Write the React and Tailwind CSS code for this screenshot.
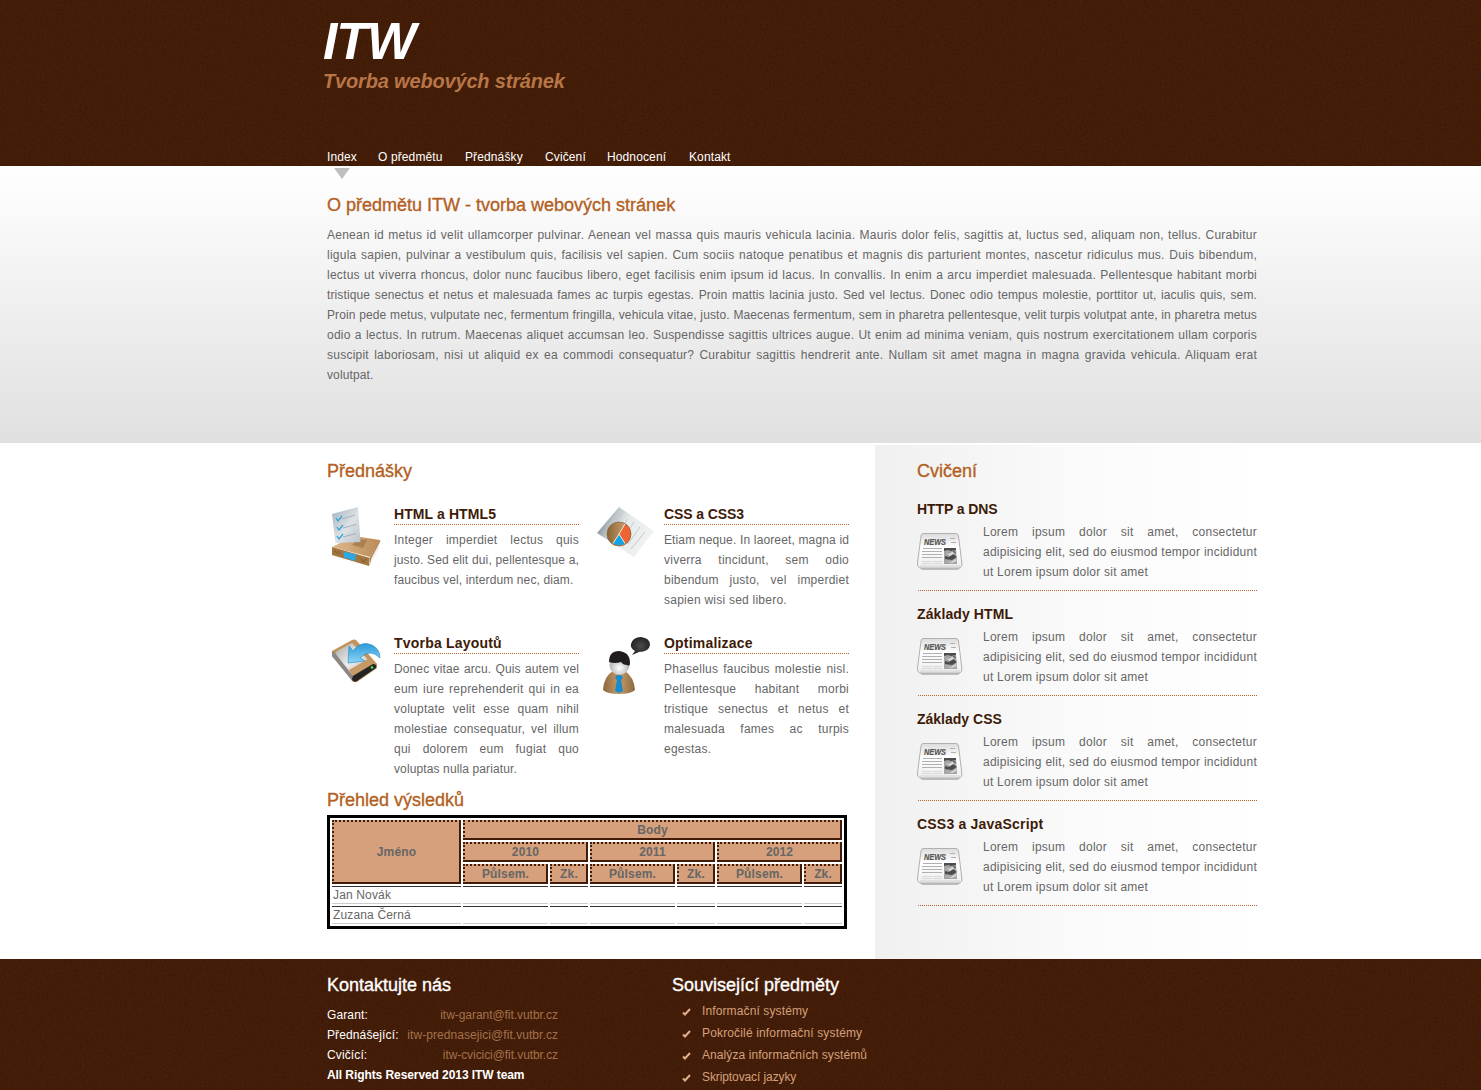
import React from "react";

const INTRO = [
  "Aenean id metus id velit ullamcorper pulvinar. Aenean vel massa quis mauris vehicula lacinia. Mauris dolor felis, sagittis at, luctus sed, aliquam non, tellus. Curabitur",
  "ligula sapien, pulvinar a vestibulum quis, facilisis vel sapien. Cum sociis natoque penatibus et magnis dis parturient montes, nascetur ridiculus mus. Duis bibendum,",
  "lectus ut viverra rhoncus, dolor nunc faucibus libero, eget facilisis enim ipsum id lacus. In convallis. In enim a arcu imperdiet malesuada. Pellentesque habitant morbi",
  "tristique senectus et netus et malesuada fames ac turpis egestas. Proin mattis lacinia justo. Sed vel lectus. Donec odio tempus molestie, porttitor ut, iaculis quis, sem.",
  "Proin pede metus, vulputate nec, fermentum fringilla, vehicula vitae, justo. Maecenas fermentum, sem in pharetra pellentesque, velit turpis volutpat ante, in pharetra metus",
  "odio a lectus. In rutrum. Maecenas aliquet accumsan leo. Suspendisse sagittis ultrices augue. Ut enim ad minima veniam, quis nostrum exercitationem ullam corporis",
  "suscipit laboriosam, nisi ut aliquid ex ea commodi consequatur? Curabitur sagittis hendrerit ante. Nullam sit amet magna in magna gravida vehicula. Aliquam erat",
  "volutpat.",
];

const NAV = [
  ["Index", "w-[51px]"],
  ["O předmětu", "w-[87px]"],
  ["Přednášky", "w-[80px]"],
  ["Cvičení", "w-[62px]"],
  ["Hodnocení", "w-[82px]"],
  ["Kontakt", "w-[60px]"],
];

function Lines({ lines, tight = [] }) {
  const last = lines.length - 1;
  return (
    <p className="text-xs leading-5 text-[#666]">
      {lines.map((line, i) => (
        <span
          key={i}
          className={
            "block whitespace-nowrap " +
            (i === last ? "" : "[text-align-last:justify] ") +
            (tight.includes(i) ? "tracking-[0.12px]" : "tracking-[0.24px]")
          }
        >
          {line}
        </span>
      ))}
    </p>
  );
}

function Grain() {
  return (
    <svg className="pointer-events-none absolute inset-0 h-full w-full" aria-hidden="true">
      <filter id="grain" x="0" y="0" width="100%" height="100%">
        <feTurbulence type="fractalNoise" baseFrequency="0.45" numOctaves="2" seed="4" />
        <feColorMatrix values="0 0 0 0 0  0 0 0 0 0  0 0 0 0 0  0.45 0 0 0 -0.14" />
      </filter>
      <rect width="100%" height="100%" filter="url(#grain)" opacity="0.7" />
    </svg>
  );
}

function BookIcon() {
  return (
    <svg width="50" height="62" viewBox="0 0 50 62">
      <defs>
        <linearGradient id="bkP" x1="0" y1="0" x2="1" y2="1">
          <stop offset="0" stopColor="#a4b1ba" />
          <stop offset=".55" stopColor="#dce2e6" />
          <stop offset="1" stopColor="#b9c3ca" />
        </linearGradient>
        <linearGradient id="bkC" x1="0" y1="0" x2="1" y2="0">
          <stop offset="0" stopColor="#dfb98b" />
          <stop offset="1" stopColor="#b98a58" />
        </linearGradient>
      </defs>
      <path d="M0 41 22 30 48 34 38 51Z" fill="url(#bkC)" />
      <path d="M0 41 38 52 37 60 0 49Z" fill="#a3753f" />
      <path d="M38 51 48 34 47 43 37 60Z" fill="#f1eeee" />
      <path d="M38 51 47.500 34 48.500 35 39.500 52 37.500 60Z" fill="#b78450" />
      <path d="M25 33 35 34 31 42 20 39Z" fill="#9b7145" opacity=".65" />
      <path d="M11.500 45.500 24 48.500 23 55 12 51.500Z" fill="#2aa9e4" />
      <path d="M3 44l2 4M6 45l2 3M29 53l2 3M34 53l-3 4" stroke="#7d5a33" />
      <path d="M0 8 26 1 28.500 36 3.500 37Z" fill="url(#bkP)" />
      <path d="M10 13 23 9M11 22 24 18.500M11 31 24 27.500" stroke="#97a5ae" strokeWidth=".8" />
      <path d="m4 12 2 3 4-5M5 21l2 3 4-5M5 30l2 3 4-5" fill="none" stroke="#28a3dc" strokeWidth="1.300" />
    </svg>
  );
}

function ChartIcon() {
  return (
    <svg width="58" height="52" viewBox="0 0 58 52">
      <defs>
        <linearGradient id="chP" x1="0" y1=".3" x2="1" y2=".7">
          <stop offset="0" stopColor="#77858d" />
          <stop offset=".22" stopColor="#bac3c7" />
          <stop offset=".45" stopColor="#e7eaeb" />
          <stop offset="1" stopColor="#f2f4f4" />
        </linearGradient>
        <linearGradient id="chB" x1="0" y1="0" x2="1" y2="0">
          <stop offset="0" stopColor="#8a6436" />
          <stop offset="1" stopColor="#d9b17d" />
        </linearGradient>
      </defs>
      <path d="M22 1 57 25 37 51 0 27Z" fill="url(#chP)" />
      <path d="M25 8 13 23M31 13 18 30M37 16l-6 9M43 21 31 38M48 26 34 43" stroke="#c3c9cb" />
      <circle cx="22" cy="28" r="12" fill="url(#chB)" />
      <path d="M22 28 28.500 17.800A12 12 0 0 1 28.500 38Z" fill="#ef6434" />
      <path d="M22 28 28 37.500Q22 41 16 37.500Z" fill="#12a4e6" />
      <path d="M28.500 17 22 28 28 37.500M22 28 16 37.500" fill="none" stroke="#f5e9d8" />
      <circle cx="22" cy="28" r="12" fill="none" stroke="#87602f" strokeWidth=".7" />
    </svg>
  );
}

function DriveIcon() {
  return (
    <svg width="50" height="44" viewBox="0 0 50 44">
      <defs>
        <linearGradient id="drS" x1="0" y1="0" x2="1" y2="1">
          <stop offset="0" stopColor="#a6a6a6" />
          <stop offset=".5" stopColor="#ececec" />
          <stop offset="1" stopColor="#b5b5b5" />
        </linearGradient>
        <linearGradient id="drA" x1="0" y1="0" x2="0" y2="1">
          <stop offset="0" stopColor="#2999d7" />
          <stop offset="1" stopColor="#8fd5f7" />
        </linearGradient>
      </defs>
      <path d="M0 12 20 1Q22 0 24 1L45 25V29L25 43Q22 44 20 41L0 17Z" fill="#c2935c" />
      <path d="M5 12 20 4 39 24 20 36 3 15Z" fill="url(#drS)" />
      <path d="M0 12 3 14 21 37V43L0 17Z" fill="#8a8784" />
      <path d="M21 37 41 25Q45 25 44 29L25 42Q21 44 20 40Z" fill="#242424" />
      <path d="M17 31 36 20 39 24 20 36Z" fill="#c79a65" />
      <circle cx="40" cy="28.500" r="1.300" fill="#4bf04b" />
      <path d="M17 7 16 24 33 22 28 19Q38 9 48 19 48 10 40 6 29 1 21 12Z" fill="url(#drA)" stroke="#1c86c4" strokeWidth=".6" strokeLinejoin="round" />
    </svg>
  );
}

function PersonIcon() {
  return (
    <svg width="49" height="58" viewBox="0 0 49 58">
      <defs>
        <linearGradient id="peB" x1="0" y1="0" x2="1" y2="0">
          <stop offset="0" stopColor="#8b6840" />
          <stop offset=".5" stopColor="#c99b66" />
          <stop offset="1" stopColor="#8b6840" />
        </linearGradient>
        <radialGradient id="peF" cx=".5" cy=".65">
          <stop offset="0" stopColor="#fff" />
          <stop offset="1" stopColor="#b5b5b8" />
        </radialGradient>
        <radialGradient id="peS">
          <stop offset="0" stopColor="#4b4b4b" />
          <stop offset="1" stopColor="#252525" />
        </radialGradient>
      </defs>
      <path d="M0 53Q1 39 10 34H22Q31 40 32 53 28 57 16 57 4 57 0 53Z" fill="url(#peB)" />
      <circle cx="16.500" cy="28" r="10" fill="url(#peF)" />
      <path d="M6 25Q6 14 16 14 27 15 27 26 27 30 24 28 20 28 18 25 12 27 6 25Z" fill="#211d1e" />
      <path d="M14 38H18L20 41 18 43 20 54 16 56 12 54 14 43 12 41Z" fill="#168bd0" />
      <path d="M38 0Q47 1 47 8 46 15 36 15L29 18 32 14Q27 11 28 7 30 0 38 0Z" fill="url(#peS)" />
    </svg>
  );
}

function NewsIcon() {
  return (
    <svg width="47" height="39" viewBox="0 0 47 39">
      <defs>
        <linearGradient id="nwP" x1="0" y1="0" x2="0" y2="1">
          <stop offset="0" stopColor="#dcdcdc" />
          <stop offset=".4" stopColor="#fff" />
          <stop offset="1" stopColor="#ededed" />
        </linearGradient>
      </defs>
      <path d="M2 34 5 37H41L44 34Z" fill="#999" opacity=".6" />
      <path d="M6 .500H39Q41 .500 41.500 3L44.800 30Q45.500 34.500 42 35H4Q0 34.500 .500 30L4 3Q4.500 .500 6 .500Z" fill="url(#nwP)" stroke="#b0b0b0" />
      <path d="M3 33H43" stroke="#d2d2d2" />
      <text x="7" y="11.500" fontFamily="Liberation Sans, sans-serif" fontSize="9" fontWeight="700" fontStyle="italic" fill="#555" stroke="#555" strokeWidth=".2" textLength="22" lengthAdjust="spacingAndGlyphs">NEWS</text>
      <path d="M33 5.500h5M34 9.500h5M6 15.500H25M5 18.500H25M5 21.500H25M5 24.500H25" stroke="#b0b0b0" />
      <path d="M5 28.500H15M16 28.500H25M5 30.500H15M16 30.500H25" stroke="#d8d8d8" />
      <path d="M27 15H39L40 31H27Z" fill="#a4a4a4" />
      <path d="M27 15H39V17L34 18 31 17 27 18ZM28 23l4 1 4-3 4 3-5 3-7-1ZM36 18l3 1-2 2Z" fill="#4c4c4c" />
      <path d="m29 20 3 1 3-2 3 1-5 3ZM28 28l6 1 5-3v2l-4 2Z" fill="#ddd" />
    </svg>
  );
}

const H3 = "text-sm leading-4 font-bold whitespace-nowrap text-[#3d1b08]";

function Topic({ icon, title, lines, tight, spacing }) {
  return (
    <article className="flex w-[252px]">
      <div className="w-[67px] shrink-0">{icon}</div>
      <div className="w-[185px]">
        <h3 className={"mb-[5px] h-[19px] border-b border-dotted border-[#b5642b] " + H3 + " " + spacing}>{title}</h3>
        <Lines lines={lines} tight={tight} />
      </div>
    </article>
  );
}

const LOREM = [
  "Lorem ipsum dolor sit amet, consectetur",
  "adipisicing elit, sed do eiusmod tempor incididunt",
  "ut Lorem ipsum dolor sit amet",
];

function NewsItem({ title, spacing }) {
  return (
    <article className="h-[105px] w-[340px]">
      <h3 className={"h-[21px] " + H3 + " " + spacing}>{title}</h3>
      <div className="ml-px flex h-[69px] border-b border-dotted border-[#b5642b]">
        <div className="-ml-px w-[66px] shrink-0 pt-[11px]"><NewsIcon /></div>
        <div className="w-[274px]"><Lines lines={LOREM} /></div>
      </div>
    </article>
  );
}

const TH =
  "h-5 border-2 border-t-[#411d09] border-r-[#411d09] border-b-[#411d09] border-l-[#411d09] [border-style:dotted_solid_solid_dotted] bg-[#d5a07b] p-0 text-center align-middle leading-4 font-bold";
const TD = "h-[18px] border-y border-t-[#333] border-b-[#ccc] p-0 pl-px leading-4 whitespace-nowrap";

function Results() {
  return (
    <table className="h-[114px] w-[520px] table-fixed border-separate border-spacing-[2px] border-[3px] border-black text-xs tracking-[0.15px] text-[#666]">
      <colgroup>
        <col className="w-[129px]" />
        <col className="w-[85px]" />
        <col className="w-[38px]" />
        <col className="w-[85px]" />
        <col className="w-[38px]" />
        <col className="w-[85px]" />
        <col className="w-[38px]" />
      </colgroup>
      <thead>
        <tr><th rowSpan={3} className={TH}>Jméno</th><th colSpan={6} className={TH}>Body</th></tr>
        <tr>{["2010", "2011", "2012"].map((y) => <th key={y} colSpan={2} className={TH}>{y}</th>)}</tr>
        <tr>{[0, 1, 2, 3, 4, 5].map((i) => <th key={i} className={TH}>{i % 2 ? "Zk." : "Půlsem."}</th>)}</tr>
      </thead>
      <tbody>
        {["Jan Novák", "Zuzana Černá"].map((n) => (
          <tr key={n}>
            <td className={TD}>{n}</td>
            {[0, 1, 2, 3, 4, 5].map((i) => <td key={i} className={TD} />)}
          </tr>
        ))}
      </tbody>
    </table>
  );
}

const H2 = "text-lg leading-5 font-normal whitespace-nowrap [-webkit-text-stroke:0.35px]";

const CONTACTS = [
  ["Garant:", "itw-garant@fit.vutbr.cz", "tracking-[-0.05px]"],
  ["Přednášející:", "itw-prednasejici@fit.vutbr.cz", "tracking-[0.06px]"],
  ["Cvičící:", "itw-cvicici@fit.vutbr.cz", "tracking-[-0.07px]"],
];

const SUBJECTS = [
  ["Informační systémy", "tracking-[0.12px]"],
  ["Pokročilé informační systémy", "tracking-[0.15px]"],
  ["Analýza informačních systémů", "tracking-[0.08px]"],
  ["Skriptovací jazyky", "tracking-[-0.1px]"],
];

export default function App() {
  return (
    <div className="h-[1090px] w-[1481px] overflow-hidden bg-white font-['Liberation_Sans',Arial,sans-serif] text-xs">
      <header className="relative h-[166px] bg-[#471f09]">
        <Grain />
        <div className="relative ml-[323px] flex h-full flex-col">
          <h1 className="mt-[13px] h-[57px] text-[52px] leading-[57px] font-bold tracking-[-1.1px] text-white italic">ITW</h1>
          <p className="h-[22px] text-xl leading-[22px] font-bold tracking-[-0.17px] text-[#b87547] italic"><span className="whitespace-nowrap">Tvorba webových stránek</span></p>
          <nav className="mt-[55px] ml-1 flex tracking-[0.12px] text-white">
            {NAV.map(([label, w]) => <a key={label} className={"leading-5 whitespace-nowrap " + w}>{label}</a>)}
          </nav>
        </div>
      </header>

      <section className="h-[277px] bg-linear-to-b from-white to-[#e0e0e0] pt-[2px] pl-[327px]">
        <svg className="ml-[7px] block" width="16" height="11" viewBox="0 0 16 11"><path d="M0 0H16L8 11Z" fill="#bfbfbf" /></svg>
        <h2 className={"mt-[16px] mb-[10px] text-[#b35f24] " + H2}>O předmětu ITW - tvorba webových stránek</h2>
        <div className="w-[930px]"><Lines lines={INTRO} tight={[3, 4, 7]} /></div>
      </section>

      <main className="flex h-[516px] pt-[2px] pl-[327px]">
        <section className="w-[548px] pt-4">
          <h2 className={"text-[#b35f24] " + H2}>Přednášky</h2>
          <div className="mt-[25px] grid w-[522px] grid-cols-[270px_252px] grid-rows-[129px_155px]">
            <Topic spacing="tracking-[0.1px]" tight={[1, 2]} icon={<div className="ml-[5px]"><BookIcon /></div>} title="HTML a HTML5" lines={["Integer imperdiet lectus quis", "justo. Sed elit dui, pellentesque a,", "faucibus vel, interdum nec, diam."]} />
            <Topic spacing="tracking-[-0.1px]" tight={[0]} icon={<ChartIcon />} title="CSS a CSS3" lines={["Etiam neque. In laoreet, magna id", "viverra tincidunt, sem odio", "bibendum justo, vel imperdiet", "sapien wisi sed libero."]} />
            <Topic spacing="tracking-[0.2px]" tight={[0, 5]} icon={<div className="mt-1 ml-[5px]"><DriveIcon /></div>} title="Tvorba Layoutů" lines={["Donec vitae arcu. Quis autem vel", "eum iure reprehenderit qui in ea", "voluptate velit esse quam nihil", "molestiae consequatur, vel illum", "qui dolorem eum fugiat quo", "voluptas nulla pariatur."]} />
            <Topic spacing="tracking-[0.2px]" icon={<div className="mt-[2px] ml-[6px]"><PersonIcon /></div>} title="Optimalizace" lines={["Phasellus faucibus molestie nisl.", "Pellentesque habitant morbi", "tristique senectus et netus et", "malesuada fames ac turpis", "egestas."]} />
          </div>
          <h2 className={"mb-[5px] text-[#b35f24] " + H2}>Přehled výsledků</h2>
          <Results />
        </section>
        <aside className="h-[514px] w-[382px] bg-linear-to-r from-[#f0f0f0] via-[#fafafa] to-white pt-4 pl-[42px]">
          <h2 className={"mb-[20px] text-[#b35f24] " + H2}>Cvičení</h2>
          <NewsItem title="HTTP a DNS" spacing="tracking-[-0.1px]" />
          <NewsItem title="Základy HTML" spacing="tracking-[0.1px]" />
          <NewsItem title="Základy CSS" spacing="tracking-[0px]" />
          <NewsItem title="CSS3 a JavaScript" spacing="tracking-[0.2px]" />
        </aside>
      </main>

      <footer className="relative h-[131px] overflow-hidden bg-[#471f09]">
        <Grain />
        <div className="relative flex pt-4 pl-[327px]">
          <section className="w-[345px] text-white">
            <h2 className={"mb-[10px] " + H2}>Kontaktujte nás</h2>
            <dl className="w-[231px] leading-5">
              {CONTACTS.map(([k, v, spacing]) => (
                <div key={k} className="flex justify-between whitespace-nowrap"><dt className="tracking-[0.12px]">{k}</dt><dd className={"text-[#a5714b] " + spacing}>{v}</dd></div>
              ))}
            </dl>
            <p className="leading-5 font-bold tracking-[-0.08px]">All Rights Reserved 2013 ITW team</p>
          </section>
          <section>
            <h2 className={"mb-[5px] text-white " + H2}>Související předměty</h2>
            <ul className="text-[#d5a07b]">
              {SUBJECTS.map(([s, spacing]) => (
                <li key={s} className={"flex h-[22px] items-center pl-[10px] whitespace-nowrap " + spacing}>
                  <svg className="mr-[11px] mt-px" width="9" height="8" viewBox="0 0 9 8"><path d="M1 4.500 3 6.500 8 1" fill="none" stroke="#e0b08a" strokeWidth="2" /></svg>
                  {s}
                </li>
              ))}
            </ul>
          </section>
        </div>
      </footer>
    </div>
  );
}
